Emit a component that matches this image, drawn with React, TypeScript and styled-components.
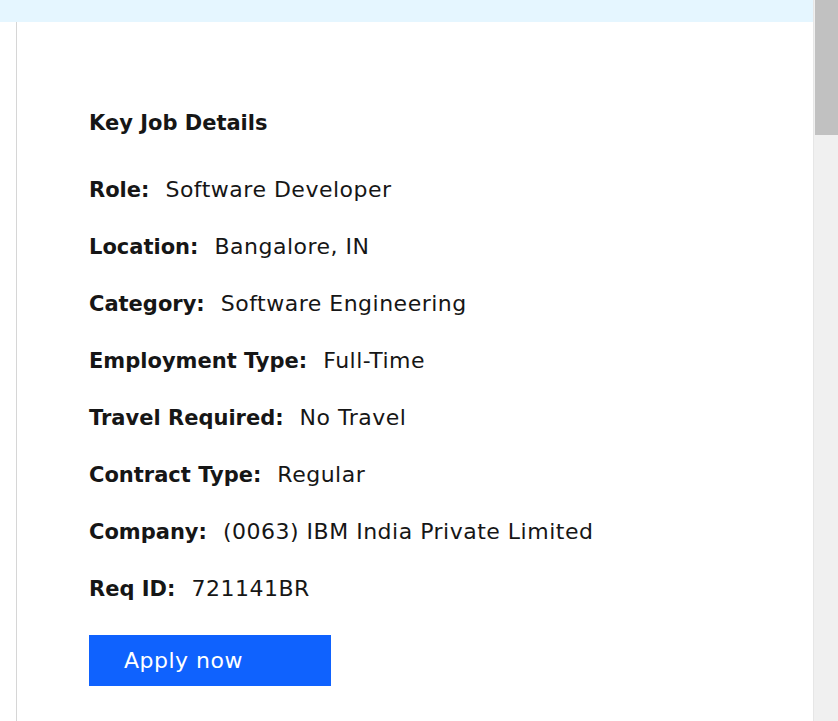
import styled, { createGlobalStyle } from "styled-components";

const GlobalStyle = createGlobalStyle`
  html, body {
    margin: 0;
    padding: 0;
    overflow: hidden;
    background: #fff;
  }
  body {
    font-family: "DejaVu Sans", "Noto Sans", sans-serif;
    color: #161616;
  }
`;

const details = [
  { label: "Role:", value: "Software Developer" },
  { label: "Location:", value: "Bangalore, IN" },
  { label: "Category:", value: "Software Engineering" },
  { label: "Employment Type:", value: "Full-Time" },
  { label: "Travel Required:", value: "No Travel" },
  { label: "Contract Type:", value: "Regular" },
  { label: "Company:", value: "(0063) IBM India Private Limited" },
  { label: "Req ID:", value: "721141BR" },
];

const App = () => {
  return (
    <>
      <GlobalStyle />
      <Window>
        <Page>
          <TopBar />
          <Body>
            <SideRail />
            <Content>
              <Heading>Key Job Details</Heading>
              <List>
                {details.map((d) => (
                  <Row key={d.label}>
                    <Label>{d.label}</Label>
                    <Value>{d.value}</Value>
                  </Row>
                ))}
              </List>
              <ApplyButton>Apply now</ApplyButton>
            </Content>
          </Body>
        </Page>
        <Scrollbar>
          <Thumb />
        </Scrollbar>
      </Window>
    </>
  );
};

export default App;

const Window = styled.div`
  display: flex;
  width: 838px;
  height: 721px;
  overflow: hidden;
`;

const Page = styled.div`
  flex: 1;
  display: flex;
  flex-direction: column;
  min-width: 0;
`;

const TopBar = styled.div`
  height: 22px;
  flex-shrink: 0;
  background: #e5f6ff;
`;

const Body = styled.div`
  flex: 1;
  display: flex;
`;

const SideRail = styled.div`
  width: 16px;
  flex-shrink: 0;
  border-right: 1px solid #d6d6d6;
`;

const Content = styled.div`
  flex: 1;
  padding: 87px 0 0 72px;
`;

const Heading = styled.h2`
  margin: 0;
  font-size: 21px;
  font-weight: 600;
  line-height: 28px;
`;

const List = styled.div`
  display: flex;
  flex-direction: column;
  gap: 29px;
  margin-top: 39px;
`;

const Row = styled.div`
  display: flex;
  align-items: baseline;
  gap: 16px;
  line-height: 28px;
`;

const Label = styled.span`
  font-size: 21px;
  font-weight: 600;
`;

const Value = styled.span`
  font-size: 22px;
  font-weight: 400;
  letter-spacing: 0.5px;
`;

const ApplyButton = styled.button`
  display: flex;
  align-items: center;
  margin-top: 32px;
  width: 242px;
  height: 51px;
  padding: 0 0 0 35px;
  border: none;
  border-radius: 0;
  background: #0f62fe;
  color: #fff;
  font-family: inherit;
  font-size: 22px;
  letter-spacing: 0.5px;
  text-align: left;
  cursor: pointer;
`;

const Scrollbar = styled.div`
  width: 25px;
  flex-shrink: 0;
  display: flex;
  justify-content: flex-end;
  align-items: flex-start;
  background: #f0f0f0;
  border-left: 1px solid #e6e6e6;
  box-sizing: border-box;
`;

const Thumb = styled.div`
  width: 23px;
  height: 135px;
  background: #c1c1c1;
`;
